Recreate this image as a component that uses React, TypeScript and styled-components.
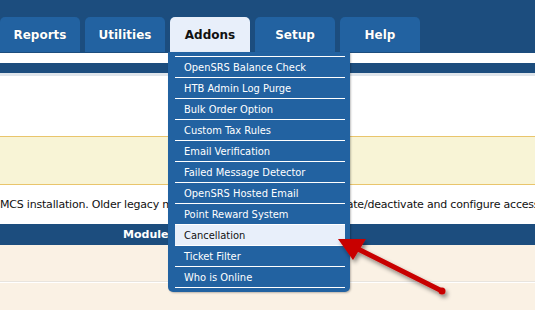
import React from "react";
import styled, { createGlobalStyle } from "styled-components";

const Global = createGlobalStyle`
  html, body { margin: 0; padding: 0; }
  body {
    background: #faf1e4;
    font-family: "DejaVu Sans", Verdana, sans-serif;
    overflow: hidden;
  }
`;

const Page = styled.div`
  position: relative;
  width: 535px;
  height: 310px;
  overflow: hidden;
  background: #faf1e4;
`;

const Header = styled.div`
  background: #1c4d7e;
  padding-top: 17px;
  padding-bottom: 1px;
`;

const Tabs = styled.div`
  display: flex;
  gap: 5px;
`;

const Tab = styled.div<{ $active?: boolean }>`
  width: 80px;
  height: 35px;
  display: flex;
  align-items: center;
  justify-content: center;
  border-radius: 5px 5px 0 0;
  background: ${(p) => (p.$active ? "#e8effa" : "#2262a1")};
  color: ${(p) => (p.$active ? "#111" : "#fff")};
  font-weight: bold;
  font-size: 12px;
  text-shadow: ${(p) => (p.$active ? "none" : "0 0 1px rgba(0,0,0,0.35)")};
`;

const WhiteStripe = styled.div`
  height: 10px;
  background: #fff;
`;

const DarkStripe = styled.div`
  height: 10px;
  background: #1c4d7e;
`;

const GrayStripe = styled.div`
  height: 3px;
  background: #dfe5eb;
`;

const WhiteBlock = styled.div`
  height: 60px;
  background: #fff;
`;

const InfoBox = styled.div`
  height: 47px;
  background: #f8f4d6;
  border-top: 1px solid #e9c56c;
  border-bottom: 1px solid #e9c56c;
`;

const Intro = styled.div`
  height: 39px;
  background: #fff;
  display: flex;
  align-items: center;
  white-space: nowrap;
  overflow: hidden;
  font-size: 11px;
  letter-spacing: -0.2px;
  color: #111;
`;

const TableHead = styled.div`
  height: 21px;
  background: #1c4d7e;
  display: flex;
  align-items: center;
  padding-left: 123px;
  color: #fff;
  font-weight: bold;
  font-size: 11px;
`;

const Row = styled.div`
  height: 36px;
  background: #faf1e4;
  border-bottom: 1px solid #e8e4de;
`;

const RowGap = styled.div`
  height: 1px;
  background: #fff;
`;

const Menu = styled.div`
  position: absolute;
  left: 168px;
  top: 52px;
  width: 182px;
  box-sizing: border-box;
  padding: 4px 5px 4px 7px;
  background: #2262a1;
  border-radius: 0 0 5px 5px;
  box-shadow: 1px 1px 2px rgba(0, 0, 0, 0.25);
`;

const MenuItem = styled.div<{ $hover?: boolean; $last?: boolean }>`
  height: 20px;
  border-top: 1px solid #fff;
  border-bottom: ${(p) => (p.$last ? "1px solid #fff" : "none")};
  display: flex;
  align-items: center;
  padding-left: 9px;
  font-family: "DejaVu Sans Condensed", "DejaVu Sans", Verdana, sans-serif;
  font-stretch: condensed;
  font-size: 11px;
  color: ${(p) => (p.$hover ? "#111" : "#fff")};
  background: ${(p) => (p.$hover ? "#e8effa" : "transparent")};
  white-space: nowrap;
`;

const Arrow = styled.svg`
  position: absolute;
  left: 0;
  top: 0;
  pointer-events: none;
`;

const tabs = ["Reports", "Utilities", "Addons", "Setup", "Help"];
const items = [
  "OpenSRS Balance Check",
  "HTB Admin Log Purge",
  "Bulk Order Option",
  "Custom Tax Rules",
  "Email Verification",
  "Failed Message Detector",
  "OpenSRS Hosted Email",
  "Point Reward System",
  "Cancellation",
  "Ticket Filter",
  "Who is Online",
];

export default function App() {
  return (
    <Page>
      <Global />
      <Header>
        <Tabs>
          {tabs.map((t) => (
            <Tab key={t} $active={t === "Addons"}>
              {t}
            </Tab>
          ))}
        </Tabs>
      </Header>
      <WhiteStripe />
      <DarkStripe />
      <GrayStripe />
      <WhiteBlock />
      <InfoBox />
      <Intro>
        MCS installation. Older legacy modules will still allow you to activate/deactivate and configure access rights, but will not show any configuration options.
      </Intro>
      <TableHead>Module</TableHead>
      <Row />
      <RowGap />
      <Row />
      <Menu>
        {items.map((it, i) => (
          <MenuItem key={it} $hover={it === "Cancellation"} $last={i === items.length - 1}>
            {it}
          </MenuItem>
        ))}
      </Menu>
      <Arrow width="535" height="310" viewBox="0 0 535 310">
        <defs>
          <filter id="sh" x="-20%" y="-20%" width="140%" height="140%">
            <feDropShadow dx="2" dy="3" stdDeviation="2" floodColor="#000" floodOpacity="0.45" />
          </filter>
        </defs>
        <g filter="url(#sh)" fill="#c80000" stroke="#c80000">
          <line x1="442" y1="291" x2="356" y2="248" strokeWidth="5" strokeLinecap="round" />
          <circle cx="442" cy="291" r="3.5" stroke="none" />
          <polygon points="338,239 366,239 353,260" stroke="none" />
        </g>
      </Arrow>
    </Page>
  );
}
